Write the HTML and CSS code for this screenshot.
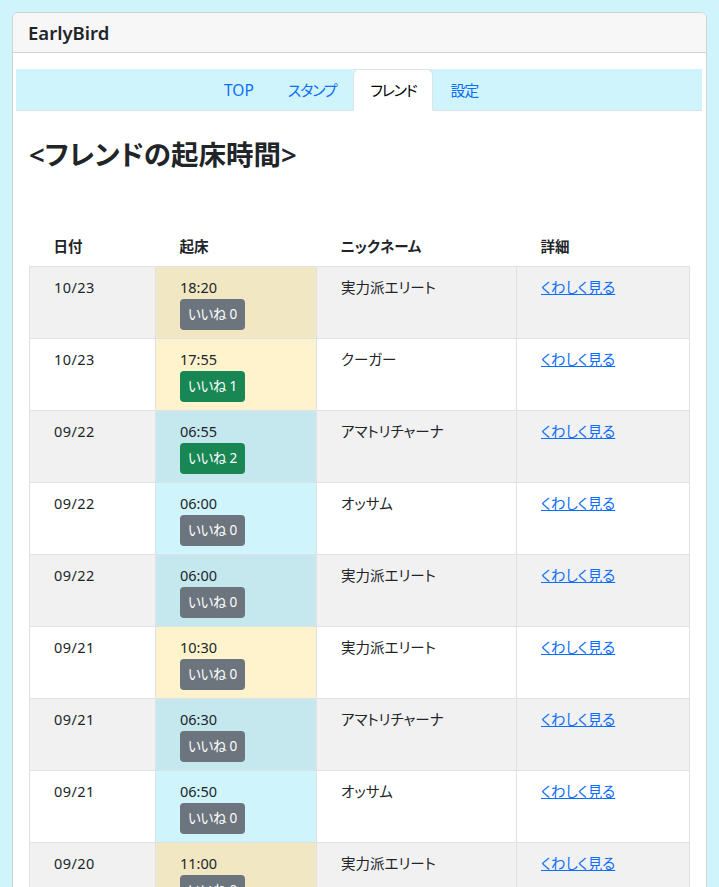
FILE: index.html
```html
<!DOCTYPE html>
<html lang="ja">
<head>
    <meta charset="UTF-8">
    <meta name="viewport" content="width=device-width, initial-scale=1.0">
    <title>EarlyBird</title>
    <link rel="stylesheet" href="styles.css">
</head>
<body>
    <div class="card">
        <div class="card-header">
            <h5>EarlyBird</h5>
        </div>
        <div class="card-body">
            <ul class="nav-tabs">
                <li><a class="nav-link" href="#">TOP</a></li>
                <li><a class="nav-link jp" href="#">スタンプ</a></li>
                <li><a class="nav-link jp active" href="#">フレンド</a></li>
                <li><a class="nav-link jp" href="#">設定</a></li>
            </ul>

            <div class="tab-content">
                <h2 class="page-title">&lt;フレンドの起床時間&gt;</h2>

                <table class="friend-table">
                    <thead>
                        <tr>
                            <th class="col-date">日付</th>
                            <th class="col-time">起床</th>
                            <th class="col-name">ニックネーム</th>
                            <th class="col-detail">詳細</th>
                        </tr>
                    </thead>
                    <tbody>
                        <tr>
                            <td class="date">10/23</td>
                            <td class="late">18:20<br><button class="btn btn-gray">いいね 0</button></td>
                            <td>実力派エリート</td>
                            <td><a href="#">くわしく見る</a></td>
                        </tr>
                        <tr>
                            <td class="date">10/23</td>
                            <td class="late">17:55<br><button class="btn btn-green">いいね 1</button></td>
                            <td>クーガー</td>
                            <td><a href="#">くわしく見る</a></td>
                        </tr>
                        <tr>
                            <td class="date">09/22</td>
                            <td class="early">06:55<br><button class="btn btn-green">いいね 2</button></td>
                            <td>アマトリチャーナ</td>
                            <td><a href="#">くわしく見る</a></td>
                        </tr>
                        <tr>
                            <td class="date">09/22</td>
                            <td class="early">06:00<br><button class="btn btn-gray">いいね 0</button></td>
                            <td>オッサム</td>
                            <td><a href="#">くわしく見る</a></td>
                        </tr>
                        <tr>
                            <td class="date">09/22</td>
                            <td class="early">06:00<br><button class="btn btn-gray">いいね 0</button></td>
                            <td>実力派エリート</td>
                            <td><a href="#">くわしく見る</a></td>
                        </tr>
                        <tr>
                            <td class="date">09/21</td>
                            <td class="late">10:30<br><button class="btn btn-gray">いいね 0</button></td>
                            <td>実力派エリート</td>
                            <td><a href="#">くわしく見る</a></td>
                        </tr>
                        <tr>
                            <td class="date">09/21</td>
                            <td class="early">06:30<br><button class="btn btn-gray">いいね 0</button></td>
                            <td>アマトリチャーナ</td>
                            <td><a href="#">くわしく見る</a></td>
                        </tr>
                        <tr>
                            <td class="date">09/21</td>
                            <td class="early">06:50<br><button class="btn btn-gray">いいね 0</button></td>
                            <td>オッサム</td>
                            <td><a href="#">くわしく見る</a></td>
                        </tr>
                        <tr>
                            <td class="date">09/20</td>
                            <td class="late">11:00<br><button class="btn btn-gray">いいね 0</button></td>
                            <td>実力派エリート</td>
                            <td><a href="#">くわしく見る</a></td>
                        </tr>
                        <tr>
                            <td class="date">09/20</td>
                            <td class="early">06:40<br><button class="btn btn-gray">いいね 0</button></td>
                            <td>オッサム</td>
                            <td><a href="#">くわしく見る</a></td>
                        </tr>
                    </tbody>
                </table>
            </div>
        </div>
    </div>
</body>
</html>
```

FILE: styles.css
```css
:root {
    --bg-info: #cff4fc;
    --text-main: #212529;
    --border-color: #dee2e6;
    --link-color: #0d6efd;
}

* {
    margin: 0;
    padding: 0;
    box-sizing: border-box;
}

body {
    font-family: 'Noto Sans', 'Noto Sans CJK JP', sans-serif;
    font-feature-settings: "palt";
    font-size: 16px;
    line-height: 1.5;
    color: var(--text-main);
    background-color: var(--bg-info);
    padding: 12px;
}

.card {
    background-color: #fff;
    border: 1px solid #d3d3d3;
    border-radius: 6px;
    overflow: hidden;
}

.card-header {
    background-color: #f7f7f7;
    border-bottom: 1px solid #d3d3d3;
    padding: 8px 15px;
}

.card-header h5 {
    font-size: 18.5px;
    font-weight: 600;
    line-height: 23px;
}

.card-body {
    padding: 16px 4px 0 3px;
}

.nav-tabs {
    display: flex;
    justify-content: center;
    list-style: none;
    background-color: var(--bg-info);
    border-bottom: 1px solid var(--border-color);
    padding-right: 16px;
}

.nav-link {
    display: block;
    margin-bottom: -1px;
    padding: 8px 16px;
    border: 1px solid transparent;
    border-radius: 6px 6px 0 0;
    color: var(--link-color);
    text-decoration: none;
    font-size: 15.5px;
    line-height: 24px;
}

.nav-link.jp {
    font-size: 15px;
    letter-spacing: -1.2px;
}

.nav-link.active {
    color: #000;
    background-color: #fff;
    border-color: var(--border-color) var(--border-color) #fff;
}

.tab-content {
    padding: 0 12px 0 13px;
}

.page-title {
    font-size: 27.5px;
    font-weight: 600;
    line-height: 33px;
    margin-top: 27px;
    margin-bottom: 55px;
}

.friend-table {
    width: 100%;
    border-collapse: collapse;
}

.friend-table th {
    text-align: left;
    font-weight: 600;
    font-size: 14.5px;
    padding: 8px 8px 8px 24px;
    line-height: 24px;
}

.col-date { width: 126px; }
.col-time { width: 161px; }
.col-name { width: 200px; }

.friend-table td {
    vertical-align: top;
    border: 1px solid var(--border-color);
    padding: 8px 8px 8px 24px;
    font-size: 14.5px;
    line-height: 24px;
}

.friend-table td.date {
    letter-spacing: 0.4px;
}

.friend-table tbody tr:nth-child(odd) td {
    background-color: #f1f1f1;
}

.friend-table td.late {
    background-color: #fff3cd;
}

.friend-table tbody tr:nth-child(odd) td.late {
    background-color: #f2e7c3;
}

.friend-table td.early {
    background-color: var(--bg-info);
}

.friend-table tbody tr:nth-child(odd) td.early {
    background-color: #c5e8ef;
}

.friend-table a {
    color: var(--link-color);
}

.btn {
    font-family: inherit;
    font-feature-settings: "palt";
    font-size: 13.5px;
    letter-spacing: -0.3px;
    line-height: 21px;
    padding: 4px 7px;
    border: 1px solid transparent;
    border-radius: 4px;
    color: #fff;
}

.btn-gray {
    background-color: #6c757d;
}

.btn-green {
    background-color: #198754;
}
```
